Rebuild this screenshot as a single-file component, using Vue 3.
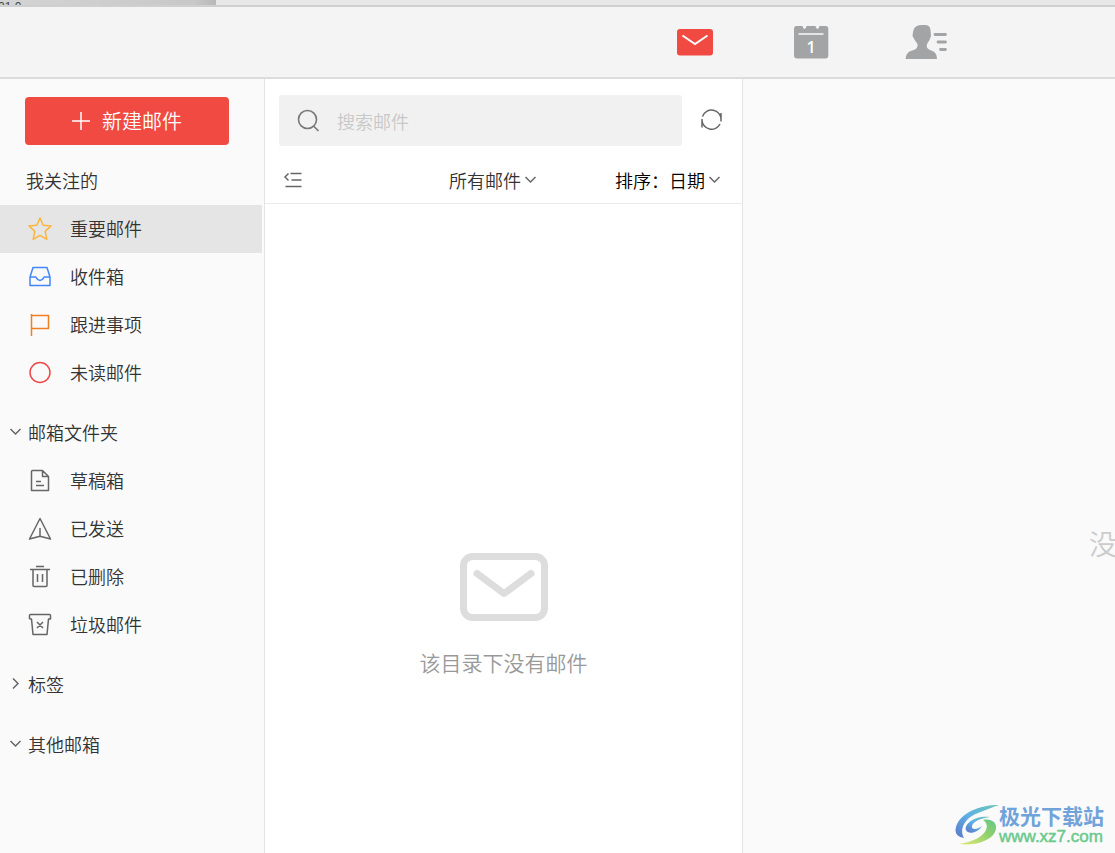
<script setup>
import { ref } from 'vue'

const query = ref('')
const filter = ref('all')
const sort = ref('date')
const active = ref('重要邮件')

const chevronDown = 'M1.5 4L6.5 9L11.5 4'
const chevronRight = 'M4 1.5L9 6.5L4 11.5'

const groups = [
  {
    title: '我关注的',
    items: [
      { name: '重要邮件', color: '#fdb53c', path: 'M12 1L15.2 8.2L23 9L17.2 14.4L18.8 22.4L12 18.4L5.2 22.4L6.8 14.4L1 9L8.8 8.2Z' },
      { name: '收件箱', color: '#4287f5', path: 'M5 2.5H19L22 12V20.5H2V12ZM2 12H7.5C8.5 12 8.5 15.5 12 15.5S15.5 12 16.5 12H22' },
      { name: '跟进事项', color: '#ef7f1f', path: 'M3.5 1V23M3.5 2.5H20.5V15.5H3.5' },
      { name: '未读邮件', color: '#f04a4a', path: 'M12 1.5A10 10 0 1 1 12 21.5A10 10 0 1 1 12 1.5Z' },
    ],
  },
  {
    title: '邮箱文件夹',
    chevron: chevronDown,
    items: [
      { name: '草稿箱', color: '#666', path: 'M4.5 1.5H14.5L20.5 7.5V21.5H3.5V2.5Q3.5 1.5 4.5 1.5ZM14.5 1.5V7.5H20.5M8 12.5H13M8 16.5H16' },
      { name: '已发送', color: '#666', path: 'M12 1.5L22.5 22L12 19.3L1.5 22ZM12 11V19' },
      { name: '已删除', color: '#666', path: 'M8 1.5H16M2 4.5H22M5 4.5V20.5Q5 21.5 6 21.5H18Q19 21.5 19 20.5V4.5M9.5 9V17M14.5 9V17' },
      { name: '垃圾邮件', color: '#666', path: 'M1.5 6V2.5Q1.5 1.5 2.5 1.5H21.5Q22.5 1.5 22.5 2.5V6H20.5L19 21.5H5L3.5 6H1.5M9 9L15 15M15 9L9 15' },
    ],
  },
  { title: '标签', chevron: chevronRight, items: [] },
  { title: '其他邮箱', chevron: chevronDown, items: [] },
]
</script>

<template>
  <div class="app">
    <div class="strip"><span class="strip-tab">21.0</span></div>

    <header class="header">
      <button class="nav" aria-label="邮件">
        <svg width="44" height="40" viewBox="0 0 44 40">
          <rect x="4" y="7" width="36" height="26.5" rx="3" fill="#f04a43" />
          <path d="M9.5 13.5L22 22L34.5 13.5" fill="none" stroke="#fff" stroke-width="2" />
        </svg>
      </button>
      <button class="nav calendar" aria-label="日历">
        <svg width="44" height="40" viewBox="0 0 44 40">
          <path d="M7.5 4H13.500Q14 7 15.500 7T17.500 4H26.500Q27 7 28.500 7T30.500 4H36.500Q39.300 4 39.300 7V33.500Q39.300 36.500 36.500 36.500H8Q5 36.500 5 33.500V7Q5 4 7.500 4Z" fill="#a3a4a6" />
          <path d="M9.500 12H34.500" stroke="#e4e4e4" stroke-width="2" />
        </svg>
        <span class="day">1</span>
      </button>
      <button class="nav" aria-label="联系人">
        <svg width="44" height="40" viewBox="0 0 44 40">
          <path d="M17 3H20Q25 3 25.500 8L26 14Q25 18 22 22Q21 26 24 27.500L28.500 29.500Q32 31.500 32 37H0.500Q1 31.500 4.500 29.500L10 27.500Q13 26 12.500 22Q9.500 18 7.500 14Q8 10 8.500 8Q10 3 17 3Z" fill="#a3a4a6" />
          <path d="M30 12.500H40.500M33 20H40.500M35.500 27.500H40.500" stroke="#a3a4a6" stroke-width="2.800" stroke-linecap="round" />
        </svg>
      </button>
    </header>

    <div class="body">
      <aside class="sidebar">
        <button class="compose">
          <svg width="18" height="18" viewBox="0 0 18 18"><path d="M9 0V18M0 9H18" stroke="#fff" stroke-width="1.500" /></svg>
          新建邮件
        </button>
        <nav>
          <section v-for="group in groups" :key="group.title" class="group">
            <h2 class="title" :class="{ foldable: group.chevron }">
              <svg v-if="group.chevron" width="13" height="13" viewBox="0 0 13 13"><path :d="group.chevron" class="chevron" /></svg>
              {{ group.title }}
            </h2>
            <button
              v-for="item in group.items"
              :key="item.name"
              class="item"
              :class="{ active: active === item.name }"
              @click="active = item.name"
            >
              <svg width="24" height="24" viewBox="0 0 24 24">
                <path :d="item.path" fill="none" :stroke="item.color" stroke-width="1.500" stroke-linejoin="round" />
              </svg>
              <span>{{ item.name }}</span>
            </button>
          </section>
        </nav>
      </aside>

      <main class="list">
        <div class="search-row">
          <label class="search">
            <svg width="24" height="24" viewBox="0 0 24 24"><path d="M11.500 1.500A9 9 0 1 1 11.500 19.500A9 9 0 1 1 11.500 1.500ZM17.500 17L22.500 22" fill="none" stroke="#777" stroke-width="1.600" /></svg>
            <input v-model="query" type="text" placeholder="搜索邮件" aria-label="搜索邮件" />
          </label>
          <button class="icon-button" aria-label="刷新">
            <svg width="24" height="24" viewBox="0 0 24 24">
              <path d="M3.500 7.500A9.500 9.500 0 0 1 22 11M22 4V12.500M21 15A9.500 9.500 0 0 1 3 11M3 10V18.500" fill="none" stroke="#666" stroke-width="1.500" />
            </svg>
          </button>
        </div>
        <div class="toolbar">
          <button class="icon-button" aria-label="收起">
            <svg width="18" height="18" viewBox="0 0 18 18">
              <path d="M6.500 2.500H17.500M7.500 9H17.500M1.500 15.500H17.500M4.500 2.500L1 6L4.500 9.500" fill="none" stroke="#666" stroke-width="1.500" />
            </svg>
          </button>
          <div class="picker filter">
            <select v-model="filter" aria-label="筛选"><option value="all">所有邮件</option></select>
            <svg width="13" height="13" viewBox="0 0 13 13"><path :d="chevronDown" class="chevron" /></svg>
          </div>
          <div class="picker sort">
            <label for="sort">排序：</label>
            <select id="sort" v-model="sort"><option value="date">日期</option></select>
            <svg width="13" height="13" viewBox="0 0 13 13"><path :d="chevronDown" class="chevron" /></svg>
          </div>
        </div>
        <div class="empty">
          <svg width="88" height="68" viewBox="0 0 88 68" fill="none" stroke="#ddd" stroke-width="7">
            <rect x="3.500" y="3.500" width="81" height="61" rx="9" />
            <path d="M17 20.500L44 40.500L71 20.500" stroke-linecap="round" stroke-linejoin="round" />
          </svg>
          <p>该目录下没有邮件</p>
        </div>
      </main>

      <section class="detail"><p>没</p></section>
    </div>

    <div class="watermark">
      <svg width="44" height="42" viewBox="0 0 44 42">
        <defs>
          <linearGradient id="sky" x1="0" y1="1" x2="1" y2="0">
            <stop offset="0" stop-color="#5a78c8" />
            <stop offset="0.500" stop-color="#5fb2e6" />
            <stop offset="1" stop-color="#6cc6b0" />
          </linearGradient>
          <linearGradient id="leaf" x1="0" y1="1" x2="1" y2="0">
            <stop offset="0" stop-color="#e4e87a" />
            <stop offset="0.600" stop-color="#8fd06c" />
            <stop offset="1" stop-color="#62c58d" />
          </linearGradient>
        </defs>
        <path d="M44 1C24 1 5 9 1 23C-1 31 4 33 9 34C4 26 9 14 23 9C31 6 37 3 44 1Z" fill="url(#sky)" />
        <path d="M35 13C20 11 9 20 11 26C13 31 23 29 27 22C22 26 16 26 17 22C18 17 27 14 35 13Z" fill="url(#sky)" />
        <path d="M28 16C37 14 44 20 40 28C35 38 18 42 4 40C17 38 28 33 31 26C33 21 31 18 28 16Z" fill="url(#leaf)" />
      </svg>
      <div>
        <div class="brand">极光下载站</div>
        <div class="site">www.xz7.com</div>
      </div>
    </div>
  </div>
</template>

<style>
body {
  margin: 0;
}
</style>

<style scoped>
.app {
  position: relative;
  display: flex;
  flex-direction: column;
  height: 100vh;
  overflow: hidden;
  background: #fafafa;
  color: #333;
  font-family: "Noto Sans CJK SC", sans-serif;
  font-size: 18px;
  font-weight: 350;
  line-height: 24px;
}
.app * {
  box-sizing: border-box;
}
svg {
  display: block;
  flex: none;
}
button,
select,
input {
  margin: 0;
  padding: 0;
  border: 0;
  background: none;
  color: inherit;
  font: inherit;
}
p,
h2 {
  margin: 0;
  font-size: inherit;
  font-weight: inherit;
}
.chevron {
  fill: none;
  stroke: #666;
  stroke-width: 1.5;
}
.strip {
  flex: none;
  height: 7px;
  overflow: hidden;
  border-bottom: 2px solid #cfcfcf;
  background: #e7e7e7;
}
.strip-tab {
  display: block;
  width: 216px;
  height: 5px;
  background: linear-gradient(90deg, #d4d4d4, #c8c8c8 90%, #b8b8b8);
  color: #444;
  font: 12px/14px "Liberation Sans", sans-serif;
  text-indent: -2px;
}
.header {
  display: flex;
  flex: none;
  align-items: center;
  gap: 72px;
  height: 72px;
  padding-left: 673px;
  border-bottom: 2px solid #dcdcdc;
  background: #f4f4f4;
}
.nav {
  position: relative;
  flex: none;
}
.day {
  position: absolute;
  inset: 13px 0 auto;
  color: #fff;
  font: 600 16px/24px "Open Sans", sans-serif;
  text-align: center;
}
.body {
  display: flex;
  flex: 1;
  min-height: 0;
}
.sidebar {
  flex: none;
  width: 265px;
  padding-top: 18px;
  border-right: 1px solid #e4e4e4;
}
.compose {
  display: flex;
  align-items: center;
  justify-content: center;
  gap: 12px;
  width: 204px;
  height: 48px;
  margin: 0 0 12px 25px;
  border-radius: 4px;
  background: #f04a43;
  color: #fff;
  font-size: 20px;
}
.group + .group {
  margin-top: 12px;
}
.title {
  display: flex;
  align-items: center;
  gap: 6px;
  height: 48px;
  padding: 0 0 3px 26px;
}
.title.foldable {
  padding-left: 9px;
}
.item {
  display: flex;
  align-items: center;
  gap: 18px;
  width: 262px;
  height: 48px;
  padding-left: 28px;
}
.item span {
  padding-bottom: 2px;
}
.item.active {
  background: #e5e5e5;
}
.list {
  display: flex;
  flex: none;
  flex-direction: column;
  width: 478px;
  border-right: 1px solid #e4e4e4;
  background: #fff;
}
.search-row {
  display: flex;
  align-items: center;
  gap: 17px;
  padding: 16px 19px 0 14px;
}
.search {
  display: flex;
  flex: 1;
  align-items: center;
  gap: 17px;
  height: 51px;
  padding: 0 17px;
  border-radius: 3px;
  background: #f1f1f1;
}
.search input {
  flex: 1;
  min-width: 0;
  outline: 0;
}
.search input::placeholder {
  color: #c8c8c8;
  opacity: 1;
}
.toolbar {
  display: flex;
  align-items: center;
  height: 58px;
  padding: 10px 21px 0 19px;
  border-bottom: 1px solid #ebebeb;
}
.picker {
  display: flex;
  align-items: center;
  gap: 3px;
}
.picker label {
  margin-right: -3px;
}
.picker select {
  appearance: none;
}
.filter {
  margin: 0 78px 0 auto;
}
.sort {
  color: #000;
}
.empty {
  display: flex;
  flex: 1;
  flex-direction: column;
  align-items: center;
  justify-content: center;
  gap: 27px;
  padding-top: 171px;
  color: #999;
  font-size: 21px;
  line-height: 28px;
}
.detail {
  display: flex;
  flex: 1;
  align-items: center;
  justify-content: flex-end;
  min-width: 0;
  padding-top: 154px;
  color: #ccc;
  font-size: 28px;
  line-height: 36px;
}
.detail p {
  width: 26px;
  overflow: hidden;
}
.watermark {
  position: absolute;
  right: 11px;
  bottom: 6px;
  display: flex;
  align-items: center;
}
.brand {
  color: #6fa3da;
  font-size: 21px;
  font-weight: 700;
  line-height: 24px;
}
.site {
  color: #6cc98e;
  font: 17px/20px "Liberation Sans", sans-serif;
  -webkit-text-stroke: 0.5px #6cc98e;
}
</style>
